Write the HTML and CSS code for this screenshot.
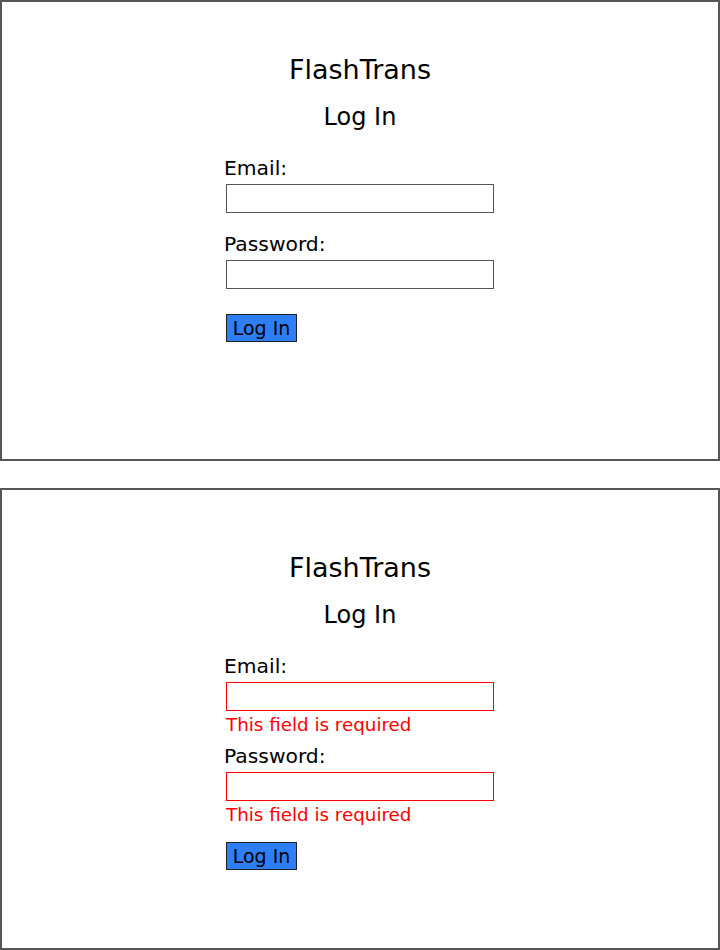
FILE: index.html
```html
<!DOCTYPE html>
<html lang="en">
<head>
<meta charset="utf-8">
<title>FlashTrans - Log In</title>
<link rel="stylesheet" href="styles.css">
</head>
<body>
  <section class="panel">
    <h1 class="brand">FlashTrans</h1>
    <h2 class="page-title">Log In</h2>
    <form class="login-form">
      <div class="field">
        <label class="field-label" for="email1">Email:</label>
        <input class="field-input" id="email1" type="email">
      </div>
      <div class="field">
        <label class="field-label" for="pass1">Password:</label>
        <input class="field-input" id="pass1" type="password">
      </div>
      <button class="submit-btn" type="button">Log In</button>
    </form>
  </section>

  <section class="panel panel--errors">
    <h1 class="brand">FlashTrans</h1>
    <h2 class="page-title">Log In</h2>
    <form class="login-form">
      <div class="field field--error">
        <label class="field-label" for="email2">Email:</label>
        <input class="field-input field-input--error" id="email2" type="email">
        <div class="field-error">This field is required</div>
      </div>
      <div class="field field--error">
        <label class="field-label" for="pass2">Password:</label>
        <input class="field-input field-input--error" id="pass2" type="password">
        <div class="field-error">This field is required</div>
      </div>
      <button class="submit-btn" type="button">Log In</button>
    </form>
  </section>
</body>
</html>
```

FILE: styles.css
```css
* {
  box-sizing: border-box;
}

html, body {
  margin: 0;
  padding: 0;
  background: #ffffff;
}

body {
  font-family: "DejaVu Sans", "Liberation Sans", sans-serif;
  color: #000000;
}

.panel {
  width: 720px;
  height: 461px;
  border: 2px solid #555555;
  padding-top: 52px;
  display: flex;
  flex-direction: column;
  align-items: center;
}

.panel--errors {
  margin-top: 27px;
  height: 462px;
  padding-top: 62px;
}

.brand {
  margin: 0;
  font-size: 27px;
  font-weight: normal;
  line-height: 31px;
}

.page-title {
  margin: 18px 0 0;
  font-size: 24px;
  font-weight: normal;
  line-height: 28px;
}

.login-form {
  margin-top: 25px;
  width: 272px;
  display: flex;
  flex-direction: column;
  align-items: flex-start;
}

.field {
  display: flex;
  flex-direction: column;
  align-items: flex-start;
  margin-bottom: 19px;
}

.field-label {
  font-size: 20.3px;
  line-height: 24px;
  margin-bottom: 4px;
}

.field-input {
  -webkit-appearance: none;
  appearance: none;
  margin: 0 0 0 2px;
  width: 268px;
  height: 29px;
  border: 1px solid #555555;
  border-radius: 0;
  background: #ffffff;
  padding: 0 4px;
  font-family: inherit;
  font-size: 16px;
  outline: none;
}

.field-input.field-input--error {
  border: 1px solid #ff0000;
}

.field-error {
  margin: 3px 0 -10px 2px;
  font-size: 18.3px;
  line-height: 21px;
  color: #ff0000;
}

.submit-btn {
  margin: 6px 0 0 2px;
  width: 71px;
  height: 28px;
  padding: 0;
  border: 1px solid #222222;
  background: #2d7ef7;
  color: #000000;
  font-family: inherit;
  font-size: 19px;
  line-height: 1;
}

.panel--errors .submit-btn {
  margin-top: 8px;
}
```
